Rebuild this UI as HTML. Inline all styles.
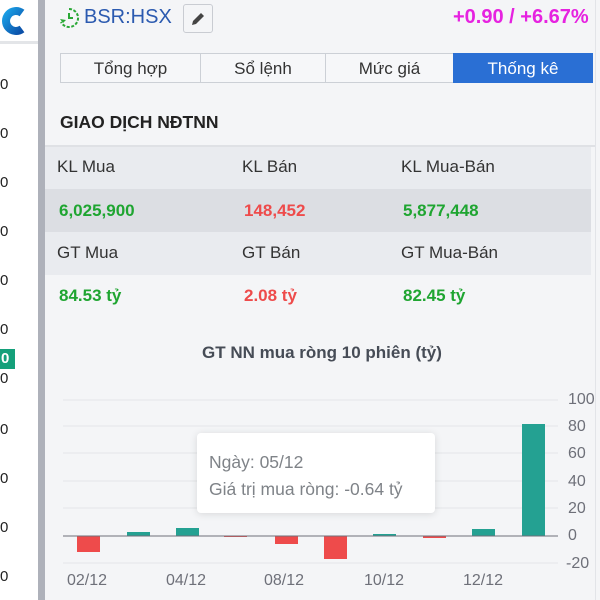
<!DOCTYPE html>
<html><head><meta charset="utf-8"><style>
*{margin:0;padding:0;box-sizing:border-box}
body{width:600px;height:600px;overflow:hidden;background:#fff;font-family:"Liberation Sans",Arial,sans-serif;position:relative}
.a{position:absolute}
.num{font-size:15px;color:#222;left:0}
.lbl{font-size:17px;color:#333}
.v{font-size:17px;font-weight:bold}
.g{color:#1fa531}.r{color:#ee4b4b}
.tab{position:absolute;top:53px;height:30px;font-size:17px;color:#333;text-align:center;line-height:29px;background:#f6f7f9;border:1px solid #ccd0d6}
</style></head><body>
<div class="a" style="left:0;top:0;width:38px;height:600px;background:#fff"></div>
<svg class="a" style="left:0;top:4px" width="28" height="34" viewBox="0 0 28 34"><defs><linearGradient id="lg" x1="0" y1="0" x2="1" y2="1"><stop offset="0" stop-color="#1aa0e6"/><stop offset="1" stop-color="#0b4fa8"/></linearGradient></defs><path d="M22 9 A10 10 0 1 0 22 25" fill="none" stroke="url(#lg)" stroke-width="8"/></svg>
<div class="a" style="left:0;top:41px;width:38px;height:3px;background:#e3e5e8"></div>
<div class="a num" style="top:76px">0</div>
<div class="a num" style="top:125px">0</div>
<div class="a num" style="top:174px">0</div>
<div class="a num" style="top:223px">0</div>
<div class="a num" style="top:272px">0</div>
<div class="a num" style="top:321px">0</div>
<div class="a" style="left:0;top:349px;width:15px;height:20px;background:#14a07a;color:#fff;font-size:15px;font-weight:bold;line-height:20px;padding-left:1px">0</div>
<div class="a num" style="top:370px">0</div>
<div class="a num" style="top:421px">0</div>
<div class="a num" style="top:470px">0</div>
<div class="a num" style="top:519px">0</div>
<div class="a num" style="top:568px">0</div>
<div class="a" style="left:38px;top:0;width:7px;height:600px;background:#aeb1ba"></div>
<div class="a" style="left:45px;top:0;width:555px;height:600px;background:#f4f5f7"></div>
<div class="a" style="left:595px;top:0;width:1px;height:600px;background:#e2e4e8"></div>
<svg class="a" style="left:58px;top:7px" width="22" height="22" viewBox="0 0 22 22"><path d="M11 2 A9 9 0 1 1 3 15" fill="none" stroke="#2aa836" stroke-width="2" stroke-dasharray="3 1.6"/><path d="M11 6v5h4" fill="none" stroke="#2aa836" stroke-width="2"/><path d="M2 12l3 4 3-3z" fill="#2aa836"/></svg>
<div class="a" style="left:84px;top:6px;font-size:20px;color:#2b5ab0">BSR:HSX</div>
<div class="a" style="left:183px;top:4px;width:30px;height:29px;border:1px solid #c9ccd2;border-radius:3px;background:#f4f5f7"></div>
<svg class="a" style="left:189px;top:10px" width="18" height="18" viewBox="0 0 18 18"><path d="M3 15l1-4 8-8 3 3-8 8z" fill="#444"/></svg>
<div class="a" style="left:453px;top:6px;font-size:20px;font-weight:bold;color:#e622e0">+0.90 / +6.67%</div>
<div class="tab" style="left:60px;width:141px">Tổng hợp</div>
<div class="tab" style="left:200px;width:126px">Sổ lệnh</div>
<div class="tab" style="left:325px;width:129px">Mức giá</div>
<div class="tab" style="left:453px;width:140px;background:#2a6fd4;border-color:#2a6fd4;color:#fff">Thống kê</div>
<div class="a" style="left:60px;top:112px;font-size:17.5px;font-weight:bold;color:#222">GIAO DỊCH NĐTNN</div>
<div class="a" style="left:45px;top:145px;width:550px;height:2px;background:#dfe1e5"></div>
<div class="a" style="left:45px;top:147px;width:546px;height:42px;background:#e9ebef"></div>
<div class="a" style="left:45px;top:189px;width:546px;height:43px;background:#dcdee3"></div>
<div class="a" style="left:45px;top:232px;width:546px;height:43px;background:#e9ebef"></div>
<div class="a lbl" style="left:57px;top:157px">KL Mua</div>
<div class="a lbl" style="left:242px;top:157px">KL Bán</div>
<div class="a lbl" style="left:401px;top:157px">KL Mua-Bán</div>
<div class="a v g" style="left:59px;top:201px">6,025,900</div>
<div class="a v r" style="left:244px;top:201px">148,452</div>
<div class="a v g" style="left:403px;top:201px">5,877,448</div>
<div class="a lbl" style="left:57px;top:243px">GT Mua</div>
<div class="a lbl" style="left:242px;top:243px">GT Bán</div>
<div class="a lbl" style="left:401px;top:243px">GT Mua-Bán</div>
<div class="a v g" style="left:59px;top:286px">84.53 tỷ</div>
<div class="a v r" style="left:244px;top:286px">2.08 tỷ</div>
<div class="a v g" style="left:403px;top:286px">82.45 tỷ</div>
<div class="a" style="left:202px;top:343px;font-size:17px;font-weight:bold;color:#464c56">GT NN mua ròng 10 phiên (tỷ)</div>
<svg class="a" style="left:0;top:0" width="600" height="600">
<g stroke="#e3e5e8" stroke-width="1">
<line x1="63" y1="400" x2="558" y2="400"/><line x1="63" y1="426" x2="558" y2="426"/><line x1="63" y1="453" x2="558" y2="453"/><line x1="63" y1="481" x2="558" y2="481"/><line x1="63" y1="508" x2="558" y2="508"/><line x1="63" y1="563" x2="558" y2="563"/></g>
<g fill="#ee4b4b"><rect x="77" y="536" width="23" height="16"/><rect x="275" y="536" width="23" height="8"/><rect x="324" y="536" width="23" height="23"/><rect x="423" y="536" width="23" height="2"/><rect x="224" y="536" width="23" height="1"/></g>
<g fill="#24a192"><rect x="127" y="532" width="23" height="4"/><rect x="176" y="528" width="23" height="8"/><rect x="373" y="534" width="23" height="2"/><rect x="472" y="529" width="23" height="7"/><rect x="522" y="424" width="23" height="112"/></g>
<line x1="63" y1="536" x2="558" y2="536" stroke="#6e7079" stroke-width="1"/>
<g font-family="Liberation Sans,sans-serif" font-size="16" fill="#6e7079">
<text x="67" y="585">02/12</text><text x="166" y="585">04/12</text><text x="264" y="585">08/12</text><text x="364" y="585">10/12</text><text x="463" y="585">12/12</text>
<text x="568" y="404">100</text><text x="568" y="431">80</text><text x="568" y="458">60</text><text x="568" y="486">40</text><text x="568" y="513">20</text><text x="568" y="540">0</text><text x="566" y="568">-20</text></g>
</svg>
<div class="a" style="left:197px;top:433px;width:238px;height:80px;background:#fff;border-radius:4px;box-shadow:0 1px 8px rgba(0,0,0,0.12);font-size:17.5px;color:#7f8388;padding:16px 0 0 12px;line-height:27px;white-space:nowrap">Ngày: 05/12<br>Giá trị mua ròng: -0.64 tỷ</div>
</body></html>
